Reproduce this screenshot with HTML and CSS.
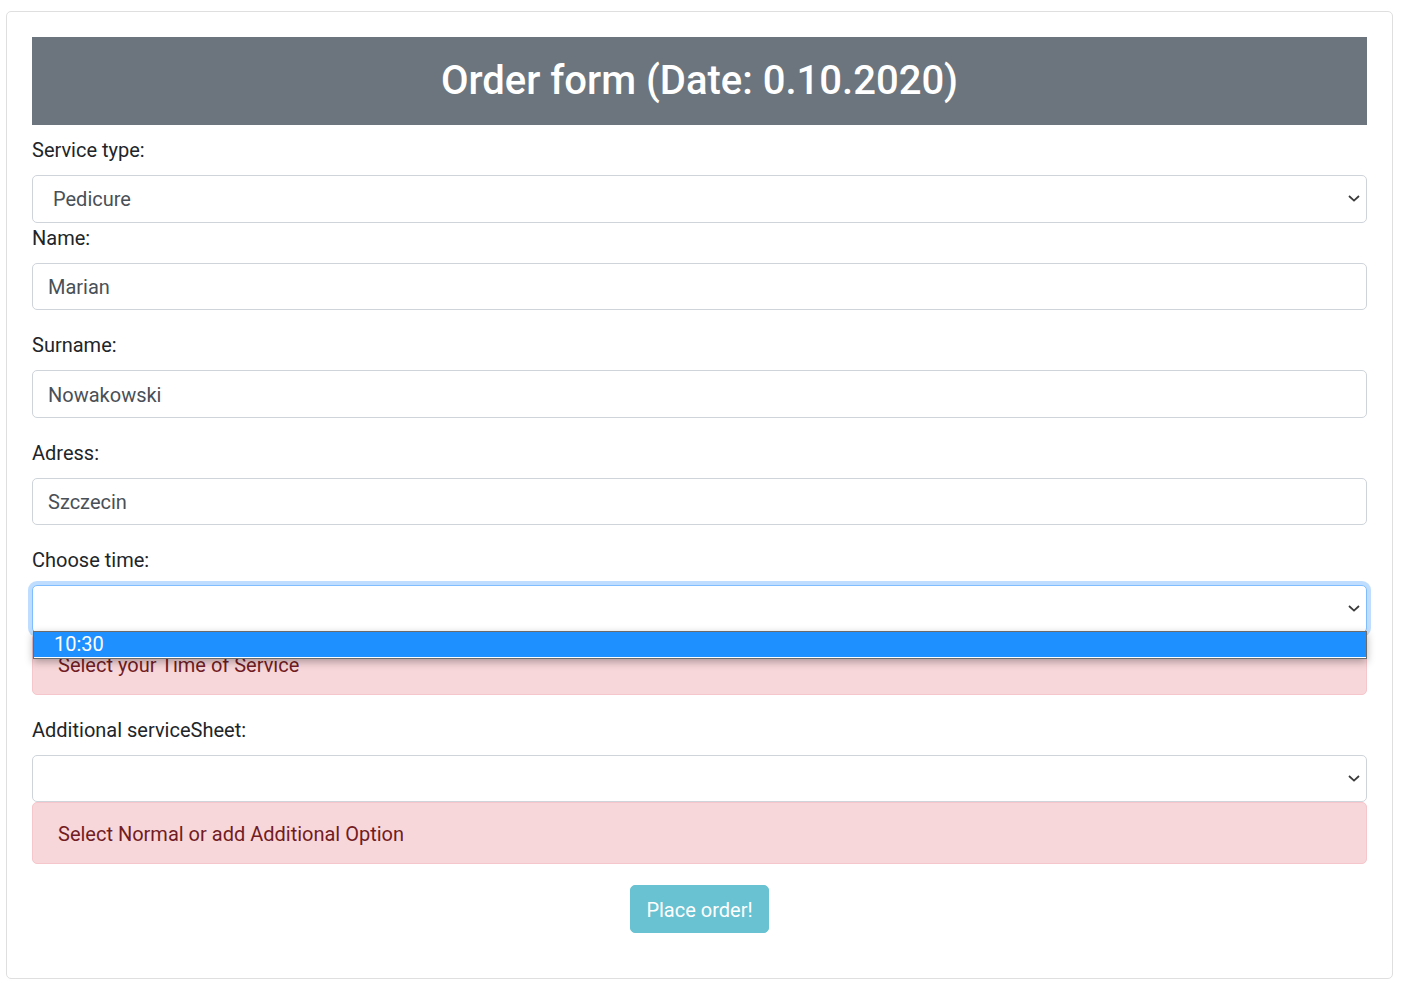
FILE: index.html
```html
<!DOCTYPE html>
<html lang="en">
<head>
<meta charset="utf-8">
<title>Order form</title>
<link rel="stylesheet" href="styles.css">
</head>
<body>
<div class="card">
  <h2 class="title">Order form (Date: 0.10.2020)</h2>
  <form class="form">
    <label class="label">Service type:</label>
    <div class="control select">
      <span class="select-value">Pedicure</span>
      <svg class="chev" width="12" height="7" viewBox="0 0 12 7"><path d="M1 1 L6 5.6 L11 1" fill="none" stroke="#3b3b3b" stroke-width="1.8"/></svg>
    </div>
    <div class="group">
      <label class="label">Name:</label>
      <div class="control input">Marian</div>
    </div>
    <div class="group">
      <label class="label">Surname:</label>
      <div class="control input">Nowakowski</div>
    </div>
    <div class="group">
      <label class="label">Adress:</label>
      <div class="control input">Szczecin</div>
    </div>
    <div class="field-time">
      <label class="label">Choose time:</label>
      <div class="select-wrap">
        <div class="control select focused">
          <span class="select-value"></span>
          <svg class="chev" width="12" height="7" viewBox="0 0 12 7"><path d="M1 1 L6 5.6 L11 1" fill="none" stroke="#3b3b3b" stroke-width="1.8"/></svg>
        </div>
        <div class="popup"><div class="option">10:30</div></div>
      </div>
      <div class="alert">Select your Time of Service</div>
    </div>
    <div class="field-extra">
      <label class="label">Additional serviceSheet:</label>
      <div class="control select">
        <span class="select-value"></span>
        <svg class="chev" width="12" height="7" viewBox="0 0 12 7"><path d="M1 1 L6 5.6 L11 1" fill="none" stroke="#3b3b3b" stroke-width="1.8"/></svg>
      </div>
      <div class="alert">Select Normal or add Additional Option</div>
    </div>
    <div class="actions">
      <button type="button" class="btn" disabled>Place order!</button>
    </div>
  </form>
</div>
</body>
</html>
```
FILE: styles.css
```css
* { box-sizing: border-box; }
html, body { margin: 0; padding: 0; background: #fff; }
body {
  font-family: Roboto, "Liberation Sans", sans-serif;
  font-size: 20px;
  line-height: 1.5;
  color: #212529;
}
.card {
  margin: 11px 9px 28px 6px;
  border: 1px solid #dfdfdf;
  border-radius: 5px;
  padding: 25px 25px 25px;
}
.title {
  margin: 0 0 10px;
  padding: 20px;
  background: #6c757d;
  color: #fff;
  text-align: center;
  font-size: 40px;
  font-weight: 500;
  line-height: 48px;
}
.form { display: flex; flex-direction: column; }
.label {
  display: block;
  margin-bottom: 10px;
  line-height: 30px;
  height: 30px;
}
.group { margin-bottom: 20px; }
.control {
  height: 47.5px;
  border: 1px solid #ced4da;
  border-radius: 5px;
  background: #fff;
  color: #495057;
  line-height: 30px;
}
.input { padding: 8.5px 15px 6.5px; }
.select {
  display: flex;
  align-items: center;
  justify-content: space-between;
  padding: 0 6px 0 20px;
}
.select-value { color: #495057; }
.chev { display: block; }
.focused {
  border-color: #80bdff;
  box-shadow: 0 0 0 4px rgba(0, 123, 255, 0.25);
}
.field-time { margin-bottom: 20px; }
.select-wrap { position: relative; }
.popup {
  position: absolute;
  left: 1px;
  right: 0;
  top: 46px;
  border: 1px solid #6b6b6b;
  background: #fff;
  padding-bottom: 1px;
  box-shadow: 0 3px 8px rgba(0, 0, 0, 0.3);
  z-index: 5;
}
.option {
  background: #1e90ff;
  color: #fff;
  height: 25px;
  line-height: 25px;
  padding-left: 20px;
  font-size: 20px;
}
.alert {
  height: 62px;
  padding: 16px 25px 14px;
  border: 1px solid #f5c6cb;
  border-radius: 5px;
  background: #f8d7da;
  color: #721c24;
  line-height: 30px;
}
.field-extra { margin-bottom: 21px; }
.actions {
  display: flex;
  justify-content: center;
  margin-bottom: 20px;
}
.btn {
  font-family: Roboto, "Liberation Sans", sans-serif;
  font-size: 20px;
  line-height: 30px;
  padding: 8.75px 15.5px;
  height: 47.5px;
  border: 1px solid #68c2d1;
  border-radius: 5px;
  background: #68c2d1;
  color: #fff;
}
```
